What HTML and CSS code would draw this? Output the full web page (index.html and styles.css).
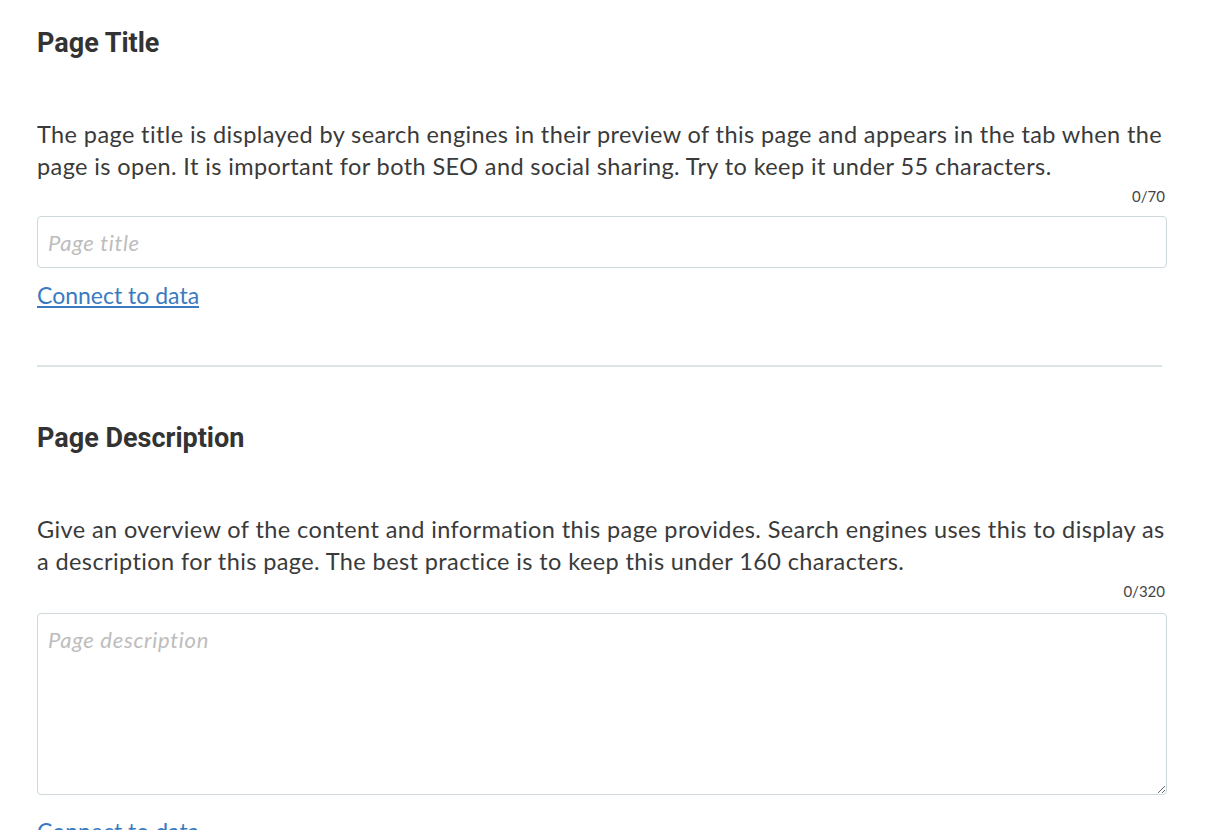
FILE: index.html
```html
<!DOCTYPE html>
<html lang="en">

<head>
    <meta charset="UTF-8" />
    <meta name="viewport" content="width=device-width, initial-scale=1.0" />
    <title>Page SEO</title>
    <link rel="stylesheet" href="styles.css">
</head>

<body>

    <div class="settings">

        <!-- Page title -->
        <section class="field">
            <h2 class="field-title">Page Title</h2>
            <p class="field-help">The page title is displayed by search engines in their preview of this page and appears in the tab when the page is open. It is important for both SEO and social sharing. Try to keep it under 55 characters.</p>
            <div class="counter">0/70</div>
            <input class="text-input" type="text" placeholder="Page title" />
            <a class="connect-link" href="#">Connect to data</a>
        </section>

        <hr class="divider" />

        <!-- Page description -->
        <section class="field">
            <h2 class="field-title">Page Description</h2>
            <p class="field-help">Give an overview of the content and information this page provides. Search engines uses this to display as a description for this page. The best practice is to keep this under 160 characters.</p>
            <div class="counter">0/320</div>
            <textarea class="text-area" placeholder="Page description"></textarea>
            <a class="connect-link" href="#">Connect to data</a>
        </section>

    </div>

</body>

</html>
```

FILE: styles.css
```css
* {
    box-sizing: border-box;
    margin: 0;
    padding: 0;
}

body {
    background-color: #fff;
    color: #3a3a3a;
    font-family: Lato, sans-serif;
}

.settings {
    width: 1130px;
    margin-left: 37px;
    padding-top: 28px;
}

.field {
    display: flex;
    flex-direction: column;
}

.field-title {
    font-family: Roboto, sans-serif;
    font-weight: 700;
    font-size: 27px;
    line-height: 30px;
    color: #333;
}

.field-help {
    width: 1136px;
    margin-top: 60px;
    font-size: 23.5px;
    line-height: 32px;
    letter-spacing: 0.4px;
}

.counter {
    align-self: flex-end;
    margin-top: 4px;
    margin-right: 2px;
    font-size: 15px;
    line-height: 20px;
    color: #444;
}

.text-input,
.text-area {
    width: 100%;
    margin-top: 10px;
    border: 1px solid #cfd8dc;
    border-radius: 4px;
    padding: 0 10px;
    font-family: Lato, sans-serif;
    font-size: 22px;
    color: #333;
    outline: none;
}

.text-input {
    height: 52px;
}

.text-area {
    height: 182px;
    margin-top: 12px;
    margin-bottom: 9px;
    padding-top: 12px;
    line-height: 28px;
    resize: vertical;
}

.text-input::placeholder,
.text-area::placeholder {
    color: #bdbdbd;
    font-style: italic;
    letter-spacing: 0.7px;
}

.connect-link {
    align-self: flex-start;
    margin-top: 13px;
    font-size: 23px;
    line-height: 28px;
    color: #3a7bbf;
}

.divider {
    width: 1125px;
    margin: 56px 0;
    border: none;
    border-top: 2px solid #dde4e6;
}
```
